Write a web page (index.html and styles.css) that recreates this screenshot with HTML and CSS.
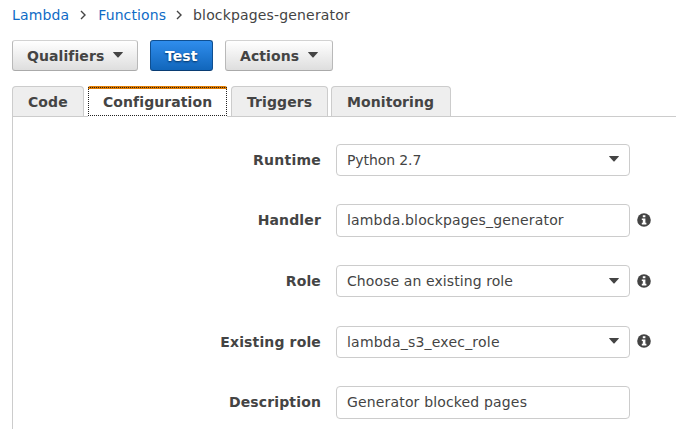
FILE: index.html
```html
<!DOCTYPE html>
<html lang="en">
<head>
<meta charset="utf-8">
<title>Lambda - blockpages-generator</title>
<link rel="stylesheet" href="styles.css">
</head>
<body>
<svg class="defs" width="0" height="0">
  <symbol id="chevron" viewBox="0 0 6 10"><path d="M1 1l4 4-4 4" fill="none" stroke="#444" stroke-width="1.4"/></symbol>
  <symbol id="caret" viewBox="0 0 10 6"><path d="M.4 0h9.2q.6 0 .2.6L5.6 5.3q-.6.5-1.2 0L.2.6Q-.2 0 .4 0z" fill="#444"/></symbol>
  <symbol id="info" viewBox="0 0 14 14"><circle cx="7" cy="7" r="6.8" fill="#444"/><path d="M5.8 2.2h2.6v2H5.8zM4.8 5.4h3.6v4.4h1v1.6H4.8V9.8h1V7h-1z" fill="#fff"/></symbol>
</svg>
<nav class="breadcrumb">
  <a href="#">Lambda</a>
  <svg class="chevron"><use href="#chevron"/></svg>
  <a href="#" class="functions">Functions</a>
  <svg class="chevron second"><use href="#chevron"/></svg>
  <span class="spaced">blockpages-generator</span>
</nav>
<div class="toolbar">
  <button class="btn qualifiers">Qualifiers<svg class="caret"><use href="#caret"/></svg></button>
  <button class="btn primary">Test</button>
  <button class="btn actions">Actions<svg class="caret"><use href="#caret"/></svg></button>
</div>
<div class="tabs">
  <a class="tab code">Code</a>
  <a class="tab active">Configuration</a>
  <a class="tab triggers">Triggers</a>
  <a class="tab monitoring">Monitoring</a>
</div>
<main class="panel">
  <div class="row"><label class="runtime">Runtime</label><div class="field tight">Python 2.7<svg class="caret"><use href="#caret"/></svg></div></div>
  <div class="row"><label>Handler</label><div class="field input spaced">lambda.blockpages_generator</div><svg class="info"><use href="#info"/></svg></div>
  <div class="row"><label>Role</label><div class="field role">Choose an existing role<svg class="caret low"><use href="#caret"/></svg></div><svg class="info"><use href="#info"/></svg></div>
  <div class="row"><label>Existing role</label><div class="field wide">lambda_s3_exec_role<svg class="caret"><use href="#caret"/></svg></div><svg class="info raised"><use href="#info"/></svg></div>
  <div class="row"><label>Description</label><div class="field input spaced">Generator blocked pages</div></div>
</main>
</body>
</html>
```
FILE: styles.css
```css
* { box-sizing: border-box; }
body {
  margin: 0;
  height: 429px;
  overflow: hidden;
  background: #fff;
  color: #444;
  font: 14px/18px "DejaVu Sans", sans-serif;
}
.defs { display: none; }
svg { flex: none; }
a { text-decoration: none; }
.breadcrumb {
  display: flex;
  align-items: center;
  height: 30px;
  padding-left: 12px;
}
.breadcrumb a { color: #0f6bc6; letter-spacing: 0.15px; }
.breadcrumb .functions { letter-spacing: 0.1px; }
.chevron { width: 6px; height: 10px; margin: 0 11px; }
.chevron:not(.second) { margin-right: 12px; }
.chevron.second { margin: 0 11px 0 10px; }
.spaced { letter-spacing: 0.16px; }
.tight { letter-spacing: -0.1px; }
.role { letter-spacing: 0.09px; }
.wide { letter-spacing: 0.21px; }
.toolbar {
  display: flex;
  gap: 12px;
  padding: 10px 0 0 12px;
}
.btn {
  display: flex;
  align-items: center;
  height: 31px;
  padding: 0 14px;
  border: 1px solid #b9b9b9;
  border-top-color: #d2d2d2;
  border-bottom-color: #aaa;
  border-radius: 3px;
  background: linear-gradient(#fff, #dedede);
  color: #444;
  font: bold 14px/18px "DejaVu Sans", sans-serif;
  letter-spacing: 0.08px;
}
.qualifiers { width: 126px; }
.actions { width: 108px; }
.caret { width: 10px; height: 6px; }
.btn .caret { margin: 0 0 1px 9px; }
.primary {
  width: 63px;
  border-color: #0f4f91;
  border-bottom-color: #093c73;
  background: linear-gradient(#2f8ded, #1166bb);
  color: #fff;
  text-shadow: 0 1px 2px #003060;
}
.tabs {
  display: flex;
  height: 31px;
  margin: 15px 0 0 12px;
  border-bottom: 1px solid #ccc;
}
.tab {
  height: 30px;
  padding: 6px 0 0 15px;
  border: 1px solid #ccc;
  border-bottom: 0;
  border-radius: 4px 4px 0 0;
  background: #eee;
  color: #444;
  font-weight: bold;
  letter-spacing: 0.08px;
}
.code { width: 72px; }
.active {
  position: relative;
  width: 139px;
  height: 31px;
  margin: 0 4px;
  padding: 4px 0 0 15px;
  border: 0;
  border-top: 3px solid #e07b00;
  border-radius: 2px 2px 0 0;
  background: #fff;
}
.active::after {
  content: "";
  position: absolute;
  inset: -2px 0 1px;
  border: 1px dotted #222;
}
.triggers { width: 97px; }
.monitoring { width: 120px; margin-left: 3px; }
.panel {
  display: grid;
  row-gap: 28px;
  height: 312px;
  margin-left: 12px;
  padding-top: 27px;
  border-left: 1px solid #ccc;
  align-content: start;
}
.row {
  display: flex;
  align-items: center;
}
label {
  width: 308px;
  margin-right: 15px;
  text-align: right;
  font-weight: bold;
  letter-spacing: 0.14px;
}
.runtime { letter-spacing: 0.24px; }
.field {
  display: flex;
  align-items: center;
  justify-content: space-between;
  width: 294px;
  height: 32px;
  padding: 0 10px;
  border: 1px solid #ccc;
  border-radius: 4px;
}
.row:nth-child(4) { margin-top: 1px; }
.row:nth-child(even) label:has(+ .input),
.row:last-child label { margin-bottom: 1px; }
.input { height: 33px; padding-bottom: 1px; }
.field .caret { margin-bottom: 2px; }
.field .low { margin-bottom: 0; }
.info { width: 14px; height: 14px; margin-left: 7px; }
.input + .info, .raised { margin-bottom: 2px; }
```
